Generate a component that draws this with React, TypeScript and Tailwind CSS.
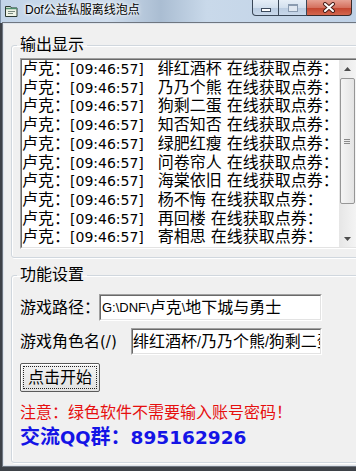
import React from "react";

const names = ["绯红酒杯", "乃乃个熊", "狗剩二蛋", "知否知否", "绿肥红瘦", "问卷帘人", "海棠依旧", "杨不悔", "再回楼", "寄相思"];

// 3D sunken edge, like a classic Windows list/edit box
function Sunken({ className, children }: { className?: string; children: React.ReactNode }) {
    return (
        <div className={`border border-t-[#a0a0a0] border-l-[#a0a0a0] border-b-white border-r-white ${className ?? ""}`}>
            <div className="h-full border border-t-[#696969] border-l-[#696969] border-b-[#e3e3e3] border-r-[#e3e3e3] bg-white">
                {children}
            </div>
        </div>
    );
}

function Arrow({ down }: { down?: boolean }) {
    return (
        <svg width="7" height="4" viewBox="0 0 7 4">
            <path d={down ? "M0 0h7L3.5 4z" : "M0 4h7L3.5 0z"} fill="#4d4d4d" />
        </svg>
    );
}

function GroupBox({ title, className, children }: { title: string; className?: string; children: React.ReactNode }) {
    return (
        <fieldset className={`border border-[#d0d7de] rounded-[3px] shadow-[inset_1px_1px_0_#fff,1px_1px_0_#fff] ${className ?? ""}`}>
            <legend className="ml-[5px] px-[3px] text-[16px] leading-[20px]">{title}</legend>
            {children}
        </fieldset>
    );
}

export default function App() {
    return (
        <div className="w-[356px] h-[471px] flex flex-col overflow-hidden bg-[#3e4248] [font-family:'Liberation_Sans','Noto_Sans_CJK_SC',sans-serif] text-black">
            {/* Title bar */}
            <div className="h-[23px] shrink-0 flex items-start bg-[linear-gradient(90deg,#c2d4e8_0%,#cfdded_30%,#aabdd2_45%,#c9d9ea_58%,#bfd1e6_100%)] border-l border-[#7f93aa]">
                <svg className="ml-[4px] mt-[5px]" width="13" height="12" viewBox="0 0 13 12">
                    <path d="M0.5 1.5h5l1 1.5h5.5v8.5h-11.5z" fill="#eef3e6" stroke="#2d3a33" />
                    <path d="M1 3.5h11" stroke="#4f8f6e" strokeWidth="1.5" />
                    <path d="M3 6.5h7M3 8.5h5" stroke="#7a8a80" />
                </svg>
                <span className="ml-[7px] mt-[3px] text-[12px] leading-[15px] [text-shadow:0_0_5px_#fff,0_0_3px_#fff]">
                    Dof公益私服离线泡点
                </span>
                <div className="ml-auto mr-[4px] flex h-[16px]">
                    <div className="w-[27px] flex items-end justify-center pb-[3px] rounded-bl-[4px] border border-t-0 border-[#3a4757] bg-[linear-gradient(180deg,#e6eef7_0%,#d3e0ee_50%,#b9cbe0_51%,#c9d8ea_100%)]">
                        <div className="w-[10px] h-[4px] bg-white border border-[#3c4a5c]" />
                    </div>
                    <div className="w-[28px] flex items-center justify-center border-b border-r border-[#3a4757] bg-[linear-gradient(180deg,#e6eef7_0%,#d3e0ee_50%,#b9cbe0_51%,#c9d8ea_100%)]">
                        <div className="w-[10px] h-[8px] border border-[#8a9bb0] border-t-2 bg-[#dfe7f1]" />
                    </div>
                    <div className="w-[45px] flex items-center justify-center rounded-br-[4px] border border-t-0 border-l-0 border-[#3a2a2a] bg-[linear-gradient(180deg,#e6a193_0%,#d5715f_50%,#c2432d_51%,#d4674f_100%)]">
                        <svg width="14" height="11" viewBox="0 0 14 11">
                            <path d="M3 2l8 7M11 2l-8 7" stroke="#4a1f1a" strokeWidth="4" strokeLinecap="round" />
                            <path d="M3 2l8 7M11 2l-8 7" stroke="#fff" strokeWidth="2" strokeLinecap="round" />
                        </svg>
                    </div>
                </div>
            </div>

            {/* Frame + client area */}
            <div className="flex-1 flex pl-[3px] pr-[6px] pb-[5px]">
                <div className="flex-1 flex flex-col bg-[#f0f0f0] border border-[#dfe5ec] pl-[7px] pr-[3px] shadow-[0_0_0_1px_#6f7680]">
                    <GroupBox title="输出显示" className="mt-[11px]">
                        <div className="pl-[8px] pr-[7px] pt-[3px] pb-[8px]">
                            <Sunken className="h-[191px]">
                                <div className="h-full flex">
                                    <div className="flex-1 overflow-hidden text-[16px] leading-[18.7px]">
                                        {names.map((n, i) => (
                                            <div key={i} className="whitespace-nowrap">
                                                卢克：<span className="[font-family:'DejaVu_Sans',sans-serif] text-[14px]">[09:46:57]</span>
                                                <span className="ml-[14px]">{n}</span>
                                                <span className="ml-[5px]">在线获取点券：</span>
                                            </div>
                                        ))}
                                    </div>
                                    <div className="w-[17px] flex flex-col bg-[linear-gradient(90deg,#e6e6e6,#f4f4f4)]">
                                        <div className="h-[17px] flex items-center justify-center">
                                            <Arrow />
                                        </div>
                                        <div className="flex-1">
                                            <div className="mt-[1px] mx-[1px] h-[126px] rounded-[2px] border border-[#969696] bg-[linear-gradient(90deg,#f4f4f4,#e4e4e4)] flex flex-col items-center justify-center gap-[1px]">
                                                <div className="w-[6px] h-px bg-[#8a8a8a]" />
                                                <div className="w-[6px] h-px bg-[#8a8a8a]" />
                                                <div className="w-[6px] h-px bg-[#8a8a8a]" />
                                            </div>
                                        </div>
                                        <div className="h-[17px] flex items-center justify-center">
                                            <Arrow down />
                                        </div>
                                    </div>
                                </div>
                            </Sunken>
                        </div>
                    </GroupBox>

                    <GroupBox title="功能设置" className="mt-[7px]">
                        <div className="pl-[8px] pt-[9px] pb-[11px] flex flex-col text-[16px]">
                            <div className="flex items-center">
                                <span className="w-[80px] shrink-0 leading-[20px] whitespace-nowrap">游戏路径：</span>
                                <Sunken className="-ml-[1px] w-[223px] h-[27px]">
                                    <div className="h-full flex items-center pl-[1px] whitespace-nowrap overflow-hidden leading-[20px]">
                                        <span className="text-[13px]">G:\DNF\</span>卢克<span className="text-[13px]">\</span>地下城与勇士
                                    </div>
                                </Sunken>
                            </div>
                            <div className="mt-[7px] flex items-center">
                                <span className="w-[111px] shrink-0 leading-[20px] whitespace-nowrap">
                                    游戏角色名<span className="[font-family:'DejaVu_Sans',sans-serif] text-[15px]">(/)</span>
                                </span>
                                <Sunken className="w-[191px] h-[27px]">
                                    <div className="h-full flex items-center whitespace-nowrap overflow-hidden leading-[20px]">
                                        绯红酒杯<span className="text-[14px]">/</span>乃乃个熊<span className="text-[14px]">/</span>狗剩二蛋<span className="text-[14px]">/</span>知否知否
                                    </div>
                                </Sunken>
                            </div>
                            <button className="mt-[8px] w-[80px] h-[29px] p-[2px] rounded-[2px] border border-[#5a5a5a] bg-[linear-gradient(180deg,#f2f2f2,#e2e2e2)] shadow-[inset_1px_1px_0_#fff]">
                                <div className="h-full flex items-center justify-center border border-dotted border-[#222] text-[16px] leading-[20px]">
                                    点击开始
                                </div>
                            </button>
                            <div className="mt-[11px] text-[#e60f0f] leading-[20px] whitespace-nowrap">
                                注意：绿色软件不需要输入账号密码！
                            </div>
                            <div className="mt-[1px] text-[#1414e6] font-bold text-[20px] leading-[26px] whitespace-nowrap">
                                交流<span className="[font-family:'DejaVu_Sans',sans-serif] text-[18px]">QQ</span>群：<span className="[font-family:'DejaVu_Sans',sans-serif] text-[18.5px]">895162926</span>
                            </div>
                        </div>
                    </GroupBox>
                </div>
            </div>
        </div>
    );
}
